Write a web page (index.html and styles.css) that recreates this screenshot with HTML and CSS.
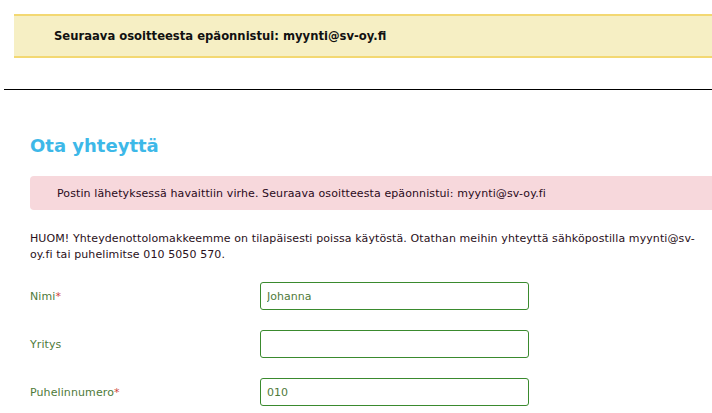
FILE: index.html
```html
<!DOCTYPE html>
<html lang="fi">
<head>
<meta charset="utf-8">
<link rel="stylesheet" href="styles.css">
</head>
<body>
<div class="page">
  <div class="notice">Seuraava osoitteesta epäonnistui: myynti@sv-oy.fi</div>
  <hr class="rule">
  <main class="content">
    <h1 class="title">Ota yhteyttä</h1>
    <div class="error">Postin lähetyksessä havaittiin virhe. Seuraava osoitteesta epäonnistui: myynti@sv-oy.fi</div>
    <p class="info">HUOM! Yhteydenottolomakkeemme on tilapäisesti poissa käytöstä. Otathan meihin yhteyttä sähköpostilla myynti@sv-oy.fi tai puhelimitse 010 5050 570.</p>
    <form class="form">
      <div class="row">
        <label class="label">Nimi<span class="req">*</span></label>
        <input class="field" type="text" value="Johanna">
      </div>
      <div class="row">
        <label class="label">Yritys</label>
        <input class="field" type="text" value="">
      </div>
      <div class="row">
        <label class="label">Puhelinnumero<span class="req">*</span></label>
        <input class="field" type="text" value="010">
      </div>
    </form>
  </main>
</div>
</body>
</html>
```
FILE: styles.css
```css
html, body {
  margin: 0;
  padding: 0;
  background: #ffffff;
  overflow: hidden;
}
.page {
  width: 740px;
  font-family: "DejaVu Sans", Verdana, sans-serif;
  font-size: 11px;
  letter-spacing: 0.1px;
  color: #2a1020;
}
.notice {
  margin: 14px 0 0 14px;
  height: 40px;
  box-sizing: content-box;
  background: #f6efc4;
  border-top: 2px solid #f3d872;
  border-bottom: 2px solid #f3d872;
  padding-left: 40px;
  font-weight: bold;
  font-size: 11.6px;
  letter-spacing: 0;
  color: #111111;
  display: flex;
  align-items: center;
}
.rule {
  margin: 31px 0 0 4px;
  border: 0;
  border-top: 1px solid #000000;
  height: 0;
}
.content {
  padding-left: 30px;
}
.title {
  margin: 44px 0 0 0;
  font-size: 18px;
  line-height: 24px;
  font-weight: bold;
  letter-spacing: 0;
  color: #3db8e8;
}
.error {
  margin-top: 18px;
  height: 34px;
  display: flex;
  align-items: center;
  padding-left: 27px;
  background: #f7d8dc;
  border-radius: 4px;
  color: #2a0a20;
}
.info {
  margin: 21px 0 0 0;
  width: 676px;
  line-height: 16px;
}
.form {
  margin-top: 19px;
  display: flex;
  flex-direction: column;
  gap: 20px;
}
.row {
  display: flex;
  align-items: center;
}
.label {
  width: 230px;
  color: #4f7a3a;
  font-size: 11px;
}
.req {
  color: #d0453a;
}
.field {
  width: 269px;
  height: 28px;
  box-sizing: border-box;
  border: 1px solid #3a8a2e;
  border-radius: 3px;
  padding: 0 6px;
  font-family: "DejaVu Sans", Verdana, sans-serif;
  font-size: 11px;
  color: #4f7a3a;
  background: #ffffff;
  margin: 0;
}
```
